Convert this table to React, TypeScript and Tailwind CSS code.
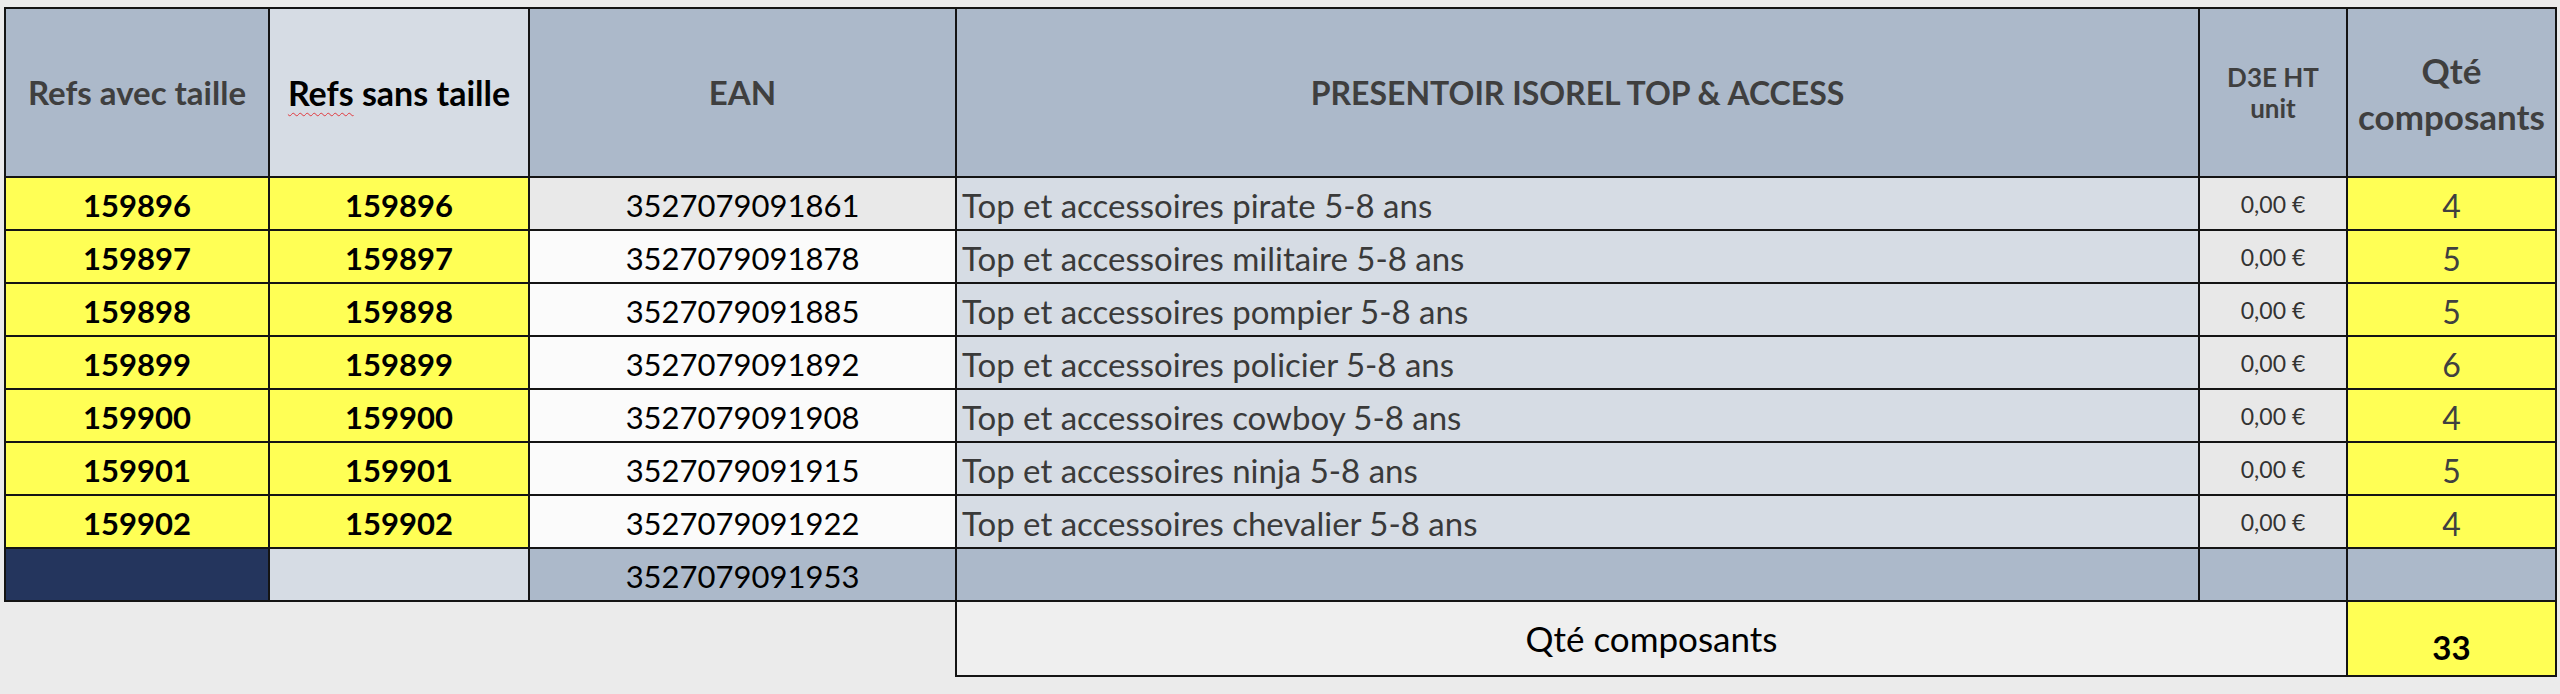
const rows = [
  { ref: "159896", ean: "3527079091861", desc: "Top et accessoires pirate 5-8 ans", qty: 4 },
  { ref: "159897", ean: "3527079091878", desc: "Top et accessoires militaire 5-8 ans", qty: 5 },
  { ref: "159898", ean: "3527079091885", desc: "Top et accessoires pompier 5-8 ans", qty: 5 },
  { ref: "159899", ean: "3527079091892", desc: "Top et accessoires policier 5-8 ans", qty: 6 },
  { ref: "159900", ean: "3527079091908", desc: "Top et accessoires cowboy 5-8 ans", qty: 4 },
  { ref: "159901", ean: "3527079091915", desc: "Top et accessoires ninja 5-8 ans", qty: 5 },
  { ref: "159902", ean: "3527079091922", desc: "Top et accessoires chevalier 5-8 ans", qty: 4 },
];

const cell = "border-r-2 border-b-2 border-[#141414] flex items-center";

export default function App() {
  return (
    <div className="w-[2560px] h-[694px] overflow-hidden bg-[#ebebeb] pt-[7px] pl-[4px] font-['Lato',sans-serif]">
      <div className="grid grid-cols-[266px_260px_427px_1243px_148px_209px] grid-rows-[171px_repeat(8,53px)_75px]">
        {/* header */}
        <div className={`${cell} border-l-2 border-t-2 justify-center bg-[#acb9ca] text-[#3f3f3f] text-[33px] font-bold`}>
          Refs avec taille
        </div>
        <div className={`${cell} border-t-2 justify-center bg-[#d6dce4] text-black text-[34px] font-bold`}>
          <span>
            <span className="underline decoration-wavy decoration-[#e0393e] decoration-1 underline-offset-[6px]">Refs</span> sans taille
          </span>
        </div>
        <div className={`${cell} border-t-2 justify-center bg-[#acb9ca] text-[#3f3f3f] text-[33px] font-bold`}>
          EAN
        </div>
        <div className={`${cell} border-t-2 justify-center bg-[#acb9ca] text-[#3f3f3f] text-[32px] font-bold`}>
          PRESENTOIR ISOREL TOP &amp; ACCESS
        </div>
        <div className={`${cell} border-t-2 justify-center bg-[#acb9ca] text-[#3f3f3f] text-[26px] font-bold text-center leading-[31px]`}>
          D3E HT
          <br />
          unit
        </div>
        <div className={`${cell} border-t-2 justify-center bg-[#acb9ca] text-[#3f3f3f] text-[35px] font-bold text-center leading-[46px]`}>
          Qté
          <br />
          composants
        </div>

        {/* data rows */}
        {rows.map((r, i) => (
          <div key={r.ref} className="contents">
            <div className={`${cell} border-l-2 justify-center bg-[#ffff55] text-black text-[31px] font-bold pt-[4px]`}>
              {r.ref}
            </div>
            <div className={`${cell} justify-center bg-[#ffff55] text-black text-[31px] font-bold pt-[4px]`}>
              {r.ref}
            </div>
            <div
              className={`${cell} justify-center text-black text-[31px] pt-[4px] ${
                i === 0 ? "bg-[#e9e9e9]" : "bg-[#fbfbfb]"
              }`}
            >
              {r.ean}
            </div>
            <div className={`${cell} bg-[#d6dce4] text-[#3a3a3a] text-[33px] pl-[5px] pt-[4px]`}>
              {r.desc}
            </div>
            <div className={`${cell} justify-center bg-[#e8e8e8] text-[#333] text-[23px] pt-[2px]`}>
              0,00 €
            </div>
            <div className={`${cell} justify-center bg-[#ffff55] text-[#404040] text-[32px] pt-[4px]`}>
              {r.qty}
            </div>
          </div>
        ))}

        {/* last row */}
        <div className={`${cell} border-l-2 bg-[#24355d]`} />
        <div className={`${cell} bg-[#d6dce4]`} />
        <div className={`${cell} justify-center bg-[#acb9ca] text-black text-[31px] pt-[4px]`}>3527079091953</div>
        <div className={`${cell} bg-[#acb9ca]`} />
        <div className={`${cell} bg-[#acb9ca]`} />
        <div className={`${cell} bg-[#acb9ca]`} />

        {/* footer */}
        <div className="col-span-3 border-r-2 border-[#141414]" />
        <div className={`${cell} col-span-2 justify-center bg-[#efefef] text-black text-[35px]`}>
          Qté composants
        </div>
        <div className="border-r-2 border-b-2 border-[#141414] flex items-end justify-center pb-[3px] bg-[#ffff55] text-black text-[33px] font-bold">
          33
        </div>
      </div>
    </div>
  );
}
